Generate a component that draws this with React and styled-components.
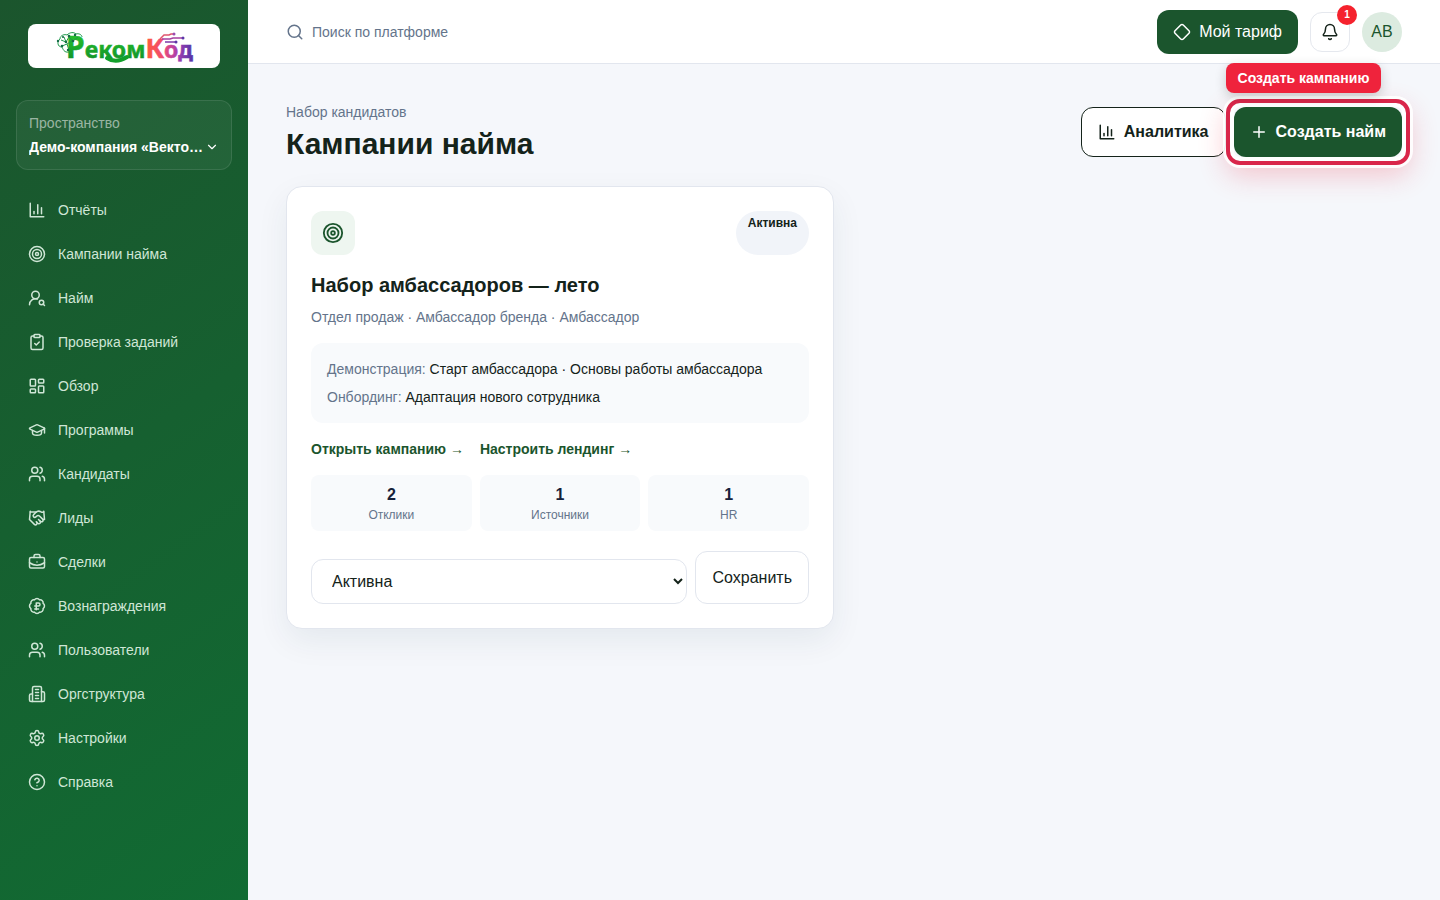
import React from "react";
import styled, { createGlobalStyle } from "styled-components";
import {
  BadgeRussianRuble,
  Bell,
  BriefcaseBusiness,
  ChevronDown,
  CircleHelp,
  ClipboardCheck,
  Diamond,
  GraduationCap,
  Handshake,
  LayoutDashboard,
  Plus,
  Search,
  Settings,
  Target,
  UserRoundSearch,
  Users
} from "lucide-react";

function LineIcon({ size = 18, children }) {
  return (
    <svg
      width={size}
      height={size}
      viewBox="0 0 24 24"
      fill="none"
      stroke="currentColor"
      strokeWidth="2"
      strokeLinecap="round"
      strokeLinejoin="round"
      aria-hidden="true"
    >
      {children}
    </svg>
  );
}

const ChartIcon = ({ size }) => (
  <LineIcon size={size}>
    <path d="M3 3v18h18" />
    <path d="M18 17V9" />
    <path d="M13 17V5" />
    <path d="M8 17v-3" />
  </LineIcon>
);

const BuildingIcon = ({ size }) => (
  <LineIcon size={size}>
    <path d="M6 22V4a2 2 0 0 1 2-2h8a2 2 0 0 1 2 2v18Z" />
    <path d="M6 12H4a2 2 0 0 0-2 2v6a2 2 0 0 0 2 2h2" />
    <path d="M18 9h2a2 2 0 0 1 2 2v9a2 2 0 0 1-2 2h-2" />
    <path d="M10 6h4" />
    <path d="M10 10h4" />
    <path d="M10 14h4" />
    <path d="M10 18h4" />
  </LineIcon>
);

const navigation = [
  { title: "Отчёты", icon: ChartIcon },
  { title: "Кампании найма", icon: Target },
  { title: "Найм", icon: UserRoundSearch },
  { title: "Проверка заданий", icon: ClipboardCheck },
  { title: "Обзор", icon: LayoutDashboard },
  { title: "Программы", icon: GraduationCap },
  { title: "Кандидаты", icon: Users },
  { title: "Лиды", icon: Handshake },
  { title: "Сделки", icon: BriefcaseBusiness },
  { title: "Вознаграждения", icon: BadgeRussianRuble },
  { title: "Пользователи", icon: Users },
  { title: "Оргструктура", icon: BuildingIcon },
  { title: "Настройки", icon: Settings },
  { title: "Справка", icon: CircleHelp }
];

const stats = [
  { value: 2, label: "Отклики" },
  { value: 1, label: "Источники" },
  { value: 1, label: "HR" }
];

function Logo() {
  return (
    <svg width="150" height="44" viewBox="0 0 150 44" role="img" aria-label="РекомКод">
      <defs>
        <linearGradient id="leaf" gradientUnits="userSpaceOnUse" x1="0" y1="10" x2="0" y2="38">
          <stop offset="0" stopColor="#27c22b" />
          <stop offset="1" stopColor="#0f8f2a" />
        </linearGradient>
        <linearGradient id="sunset" gradientUnits="userSpaceOnUse" x1="97" y1="0" x2="142" y2="0">
          <stop offset="0" stopColor="#ff5a3c" />
          <stop offset="0.4" stopColor="#ee4a78" />
          <stop offset="0.7" stopColor="#a63fb0" />
          <stop offset="1" stopColor="#5b35a8" />
        </linearGradient>
      </defs>
      <text
        x="17"
        y="34"
        fontFamily='"Noto Sans", "Open Sans", sans-serif'
        fontWeight="700"
        fontSize="23"
        fill="url(#leaf)"
        stroke="url(#leaf)"
        strokeWidth="0.5"
      >
        <tspan fontSize="30">Р</tspan>еком
        <tspan fontSize="27" fill="url(#sunset)" stroke="url(#sunset)">К</tspan>
        <tspan fill="url(#sunset)" stroke="url(#sunset)">од</tspan>
      </text>
      <path
        d="M58 34q9 6 20-1"
        fill="none"
        stroke="#12a02b"
        strokeWidth="4"
        strokeLinecap="round"
      />
      <g fill="none" stroke="#1d9a4a" strokeWidth="1">
        <path d="M20 28c-5 1-6-3-7-5-5 0-5-6-2-8 0-4 5-5 7-4 3-3 7-3 9-1 3-1 6 1 6 3" />
        <path d="M12 16l5 2 3-5 4 4 5-4M13 22l5-2 2 6M18 20l5-3M15 13l2 5" />
      </g>
      <g fill="#146c46">
        <circle cx="9" cy="17" r="1.2" />
        <circle cx="13" cy="22" r="1.3" />
        <circle cx="17" cy="18" r="1.3" />
        <circle cx="20" cy="12" r="1.3" />
        <circle cx="26" cy="11" r="1.2" />
        <circle cx="24" cy="17" r="1.3" />
        <circle cx="14" cy="13" r="1.1" />
        <circle cx="19" cy="26" r="1.2" />
      </g>
      <g fill="none" strokeWidth="1.5">
        <path d="M111 15l4-4h5l2-1h3" stroke="#e0566f" />
        <path d="M113 15h8l3-1h9" stroke="#a53fa0" />
        <path d="M116 18h10" stroke="#7b3aa8" />
      </g>
      <circle cx="125" cy="10" r="1.5" fill="#9a4bb0" />
      <circle cx="134" cy="14" r="1.5" fill="#5b35a8" />
      <circle cx="127" cy="18" r="1.5" fill="#5b35a8" />
    </svg>
  );
}

function Sidebar() {
  return (
    <Aside>
      <LogoLink href="#">
        <Logo />
      </LogoLink>
      <Workspace type="button">
        <WorkspaceLabel>Пространство</WorkspaceLabel>
        <WorkspaceRow>
          <WorkspaceName>Демо-компания «Вектор роста»</WorkspaceName>
          <ChevronDown size={14} />
        </WorkspaceRow>
      </Workspace>
      <Nav>
        {navigation.map(({ title, icon: Icon }) => (
          <NavLink href="#" key={title}>
            <Icon size={18} />
            {title}
          </NavLink>
        ))}
      </Nav>
    </Aside>
  );
}

function CampaignCard() {
  return (
    <Card>
      <CardTop>
        <CardIcon>
          <Target size={22} />
        </CardIcon>
        <Status>Активна</Status>
      </CardTop>
      <CardTitle>Набор амбассадоров — лето</CardTitle>
      <CardMeta>Отдел продаж · Амбассадор бренда · Амбассадор</CardMeta>
      <Details>
        <p>
          <Muted>Демонстрация:</Muted> Старт амбассадора · Основы работы амбассадора
        </p>
        <p>
          <Muted>Онбординг:</Muted> Адаптация нового сотрудника
        </p>
      </Details>
      <CardLinks>
        <CardLink href="#">Открыть кампанию →</CardLink>
        <CardLink href="#">Настроить лендинг →</CardLink>
      </CardLinks>
      <Stats>
        {stats.map(stat => (
          <Stat key={stat.label}>
            <StatValue>{stat.value}</StatValue>
            <StatLabel>{stat.label}</StatLabel>
          </Stat>
        ))}
      </Stats>
      <StatusForm onSubmit={e => e.preventDefault()}>
        <StatusSelect aria-label="Статус кампании" defaultValue="active">
          <option value="active">Активна</option>
        </StatusSelect>
        <SaveButton type="submit">Сохранить</SaveButton>
      </StatusForm>
    </Card>
  );
}

function App() {
  return (
    <>
      <GlobalStyle />
      <Layout>
        <Sidebar />
        <Page>
          <Topbar>
            <SearchBox>
              <Search size={18} />
              <SearchInput
                type="search"
                aria-label="Поиск по платформе"
                placeholder="Поиск по платформе"
              />
            </SearchBox>
            <TopActions>
              <PlanButton type="button">
                <Diamond size={18} />
                Мой тариф
              </PlanButton>
              <BellButton type="button" aria-label="Уведомления">
                <Bell size={18} />
                <Badge>1</Badge>
              </BellButton>
              <Avatar type="button">АВ</Avatar>
            </TopActions>
          </Topbar>
          <Main>
            <PageHead>
              <div>
                <Eyebrow>Набор кандидатов</Eyebrow>
                <PageTitle>Кампании найма</PageTitle>
              </div>
              <HeadActions>
                <HeadButton type="button">
                  <ChartIcon />
                  Аналитика
                </HeadButton>
                <Highlight>
                  <HighlightLabel>Создать кампанию</HighlightLabel>
                  <HeadButton type="button" $primary>
                    <Plus size={18} />
                    Создать найм
                  </HeadButton>
                </Highlight>
              </HeadActions>
            </PageHead>
            <CardGrid>
              <CampaignCard />
            </CardGrid>
          </Main>
        </Page>
      </Layout>
    </>
  );
}

const GlobalStyle = createGlobalStyle`
  *, *::before, *::after {
    box-sizing: border-box;
  }

  body {
    margin: 0;
    background: #f5f7fb;
    color: #14231a;
    font-family: "Liberation Sans", Arial, sans-serif;
    font-size: 14px;
    line-height: 20px;
  }

  h1, h2, p {
    margin: 0;
  }

  a {
    color: inherit;
    text-decoration: none;
  }

  button, input, select {
    font: inherit;
    color: inherit;
  }

  button {
    cursor: pointer;
  }

  svg {
    flex-shrink: 0;
  }
`;

const Layout = styled.div`
  display: flex;
  min-height: 100vh;
`;

const Aside = styled.aside`
  width: 248px;
  flex-shrink: 0;
  padding: 24px 16px;
  background: linear-gradient(145deg, #1b552d, #116b33);
  color: #fff;
`;

const LogoLink = styled.a`
  display: flex;
  justify-content: center;
  margin: 0 12px 32px;
  border-radius: 8px;
  background: #fff;
`;

const Workspace = styled.button`
  display: block;
  width: 100%;
  padding: 12px;
  border: 1px solid rgba(255, 255, 255, 0.1);
  border-radius: 12px;
  background: rgba(255, 255, 255, 0.05);
  text-align: left;
`;

const WorkspaceLabel = styled.span`
  display: block;
  margin-bottom: 4px;
  color: rgba(255, 255, 255, 0.55);
`;

const WorkspaceRow = styled.span`
  display: flex;
  align-items: center;
  justify-content: space-between;
`;

const WorkspaceName = styled.span`
  overflow: hidden;
  font-weight: 700;
  text-overflow: ellipsis;
  white-space: nowrap;
`;

const Nav = styled.nav`
  display: flex;
  flex-direction: column;
  margin-top: 18px;
`;

const NavLink = styled.a`
  display: flex;
  align-items: center;
  gap: 12px;
  height: 44px;
  padding: 0 12px;
  border-radius: 12px;
  color: #cfe6d6;
`;

const Page = styled.div`
  flex: 1;
  min-width: 0;
`;

const Topbar = styled.header`
  display: flex;
  align-items: center;
  justify-content: space-between;
  height: 64px;
  padding: 0 38px;
  border-bottom: 1px solid #e2e6ee;
  background: #fff;
`;

const SearchBox = styled.label`
  display: flex;
  flex: 1;
  align-items: center;
  gap: 8px;
  color: #64748b;
`;

const SearchInput = styled.input`
  flex: 1;
  padding: 0;
  border: 0;
  outline: 0;
  background: none;

  &::placeholder {
    color: #64748b;
  }
`;

const TopActions = styled.div`
  display: flex;
  align-items: center;
  gap: 12px;
`;

const PlanButton = styled.button`
  display: flex;
  align-items: center;
  gap: 8px;
  height: 44px;
  padding: 0 16px;
  border: 0;
  border-radius: 12px;
  background: #1b552d;
  color: #fff;
  font-size: 16px;
  font-weight: 500;
`;

const BellButton = styled.button`
  position: relative;
  display: flex;
  align-items: center;
  justify-content: center;
  width: 40px;
  height: 40px;
  padding: 0;
  border: 1px solid #e5e8ee;
  border-radius: 12px;
  background: #fff;
`;

const Badge = styled.span`
  position: absolute;
  top: -8px;
  right: -8px;
  width: 20px;
  height: 20px;
  border-radius: 50%;
  background: #f5222d;
  color: #fff;
  font-size: 10px;
  font-weight: 700;
  text-align: center;
`;

const Avatar = styled.button`
  width: 40px;
  height: 40px;
  padding: 0;
  border: 0;
  border-radius: 50%;
  background: #dcebe0;
  color: #1b552d;
  font-size: 16px;
`;

const Main = styled.main`
  padding: 38px;
`;

const PageHead = styled.div`
  display: flex;
  align-items: center;
  justify-content: space-between;
`;

const Eyebrow = styled.p`
  color: #64748b;
`;

const PageTitle = styled.h1`
  margin-top: 4px;
  font-size: 30px;
  line-height: 36px;
`;

const HeadActions = styled.div`
  display: flex;
  gap: 8px;
`;

const HeadButton = styled.button`
  display: flex;
  align-items: center;
  gap: 8px;
  height: 50px;
  padding: 0 16px;
  border: ${props => (props.$primary ? "0" : "1px solid #14231a")};
  border-radius: 12px;
  background: ${props => (props.$primary ? "#1b552d" : "#fff")};
  color: ${props => (props.$primary ? "#fff" : "#14231a")};
  font-size: 16px;
  font-weight: 700;
`;

const Highlight = styled.div`
  position: relative;

  &::after {
    content: "";
    position: absolute;
    inset: -8px;
    border: 4px solid #d9264a;
    border-radius: 14px;
    box-shadow: 0 0 0 3px rgba(255, 255, 255, 0.9),
      0 10px 28px rgba(239, 35, 60, 0.24), inset 0 0 0 4px rgba(255, 255, 255, 0.9);
    pointer-events: none;
  }
`;

const HighlightLabel = styled.span`
  position: absolute;
  z-index: 1;
  bottom: calc(100% + 14px);
  left: -8px;
  padding: 5px 12px;
  border-radius: 8px;
  background: #ef233c;
  box-shadow: 0 4px 12px rgba(20, 35, 26, 0.2);
  color: #fff;
  font-weight: 700;
  white-space: nowrap;
`;

const CardGrid = styled.div`
  display: grid;
  grid-template-columns: repeat(2, minmax(0, 1fr));
  gap: 20px;
  margin-top: 24px;
`;

const Card = styled.article`
  padding: 24px;
  border: 1px solid #e2e6ee;
  border-radius: 16px;
  background: #fff;
  box-shadow: 0 12px 32px rgba(20, 50, 70, 0.07);
`;

const CardTop = styled.div`
  display: flex;
  justify-content: space-between;
`;

const CardIcon = styled.span`
  display: flex;
  align-items: center;
  justify-content: center;
  width: 44px;
  height: 44px;
  border-radius: 12px;
  background: #eef6f0;
  color: #1b552d;
`;

const Status = styled.span`
  padding: 4px 12px;
  border-radius: 22px;
  background: #f1f4f9;
  font-size: 12px;
  font-weight: 700;
  line-height: 16px;
`;

const CardTitle = styled.h2`
  margin-top: 16px;
  font-size: 20px;
  line-height: 28px;
`;

const CardMeta = styled.p`
  margin-top: 8px;
  color: #64748b;
`;

const Details = styled.div`
  display: flex;
  flex-direction: column;
  gap: 8px;
  margin-top: 16px;
  padding: 16px;
  border-radius: 12px;
  background: #f8fafc;
`;

const Muted = styled.span`
  color: #64748b;
`;

const CardLinks = styled.div`
  display: flex;
  gap: 16px;
  margin-top: 16px;
`;

const CardLink = styled.a`
  color: #1b552d;
  font-weight: 700;
`;

const Stats = styled.div`
  display: grid;
  grid-template-columns: repeat(3, 1fr);
  gap: 8px;
  margin-top: 16px;
`;

const Stat = styled.div`
  padding: 8px;
  border-radius: 8px;
  background: #f8fafc;
  text-align: center;
`;

const StatValue = styled.p`
  color: #16213a;
  font-size: 16px;
  font-weight: 700;
  line-height: 24px;
`;

const StatLabel = styled.p`
  color: #64748b;
  font-size: 12px;
  line-height: 16px;
`;

const StatusForm = styled.form`
  display: flex;
  gap: 8px;
  margin-top: 20px;
`;

const StatusSelect = styled.select`
  flex: 1;
  height: 45px;
  margin-top: 8px;
  padding: 0 0 0 16px;
  border: 1px solid #e2e6ee;
  border-radius: 12px;
  background: #fff;
  font-size: 16px;
`;

const SaveButton = styled.button`
  padding: 0 16px;
  border: 1px solid #e2e6ee;
  border-radius: 12px;
  background: #fff;
  font-size: 16px;
`;

export default App;
